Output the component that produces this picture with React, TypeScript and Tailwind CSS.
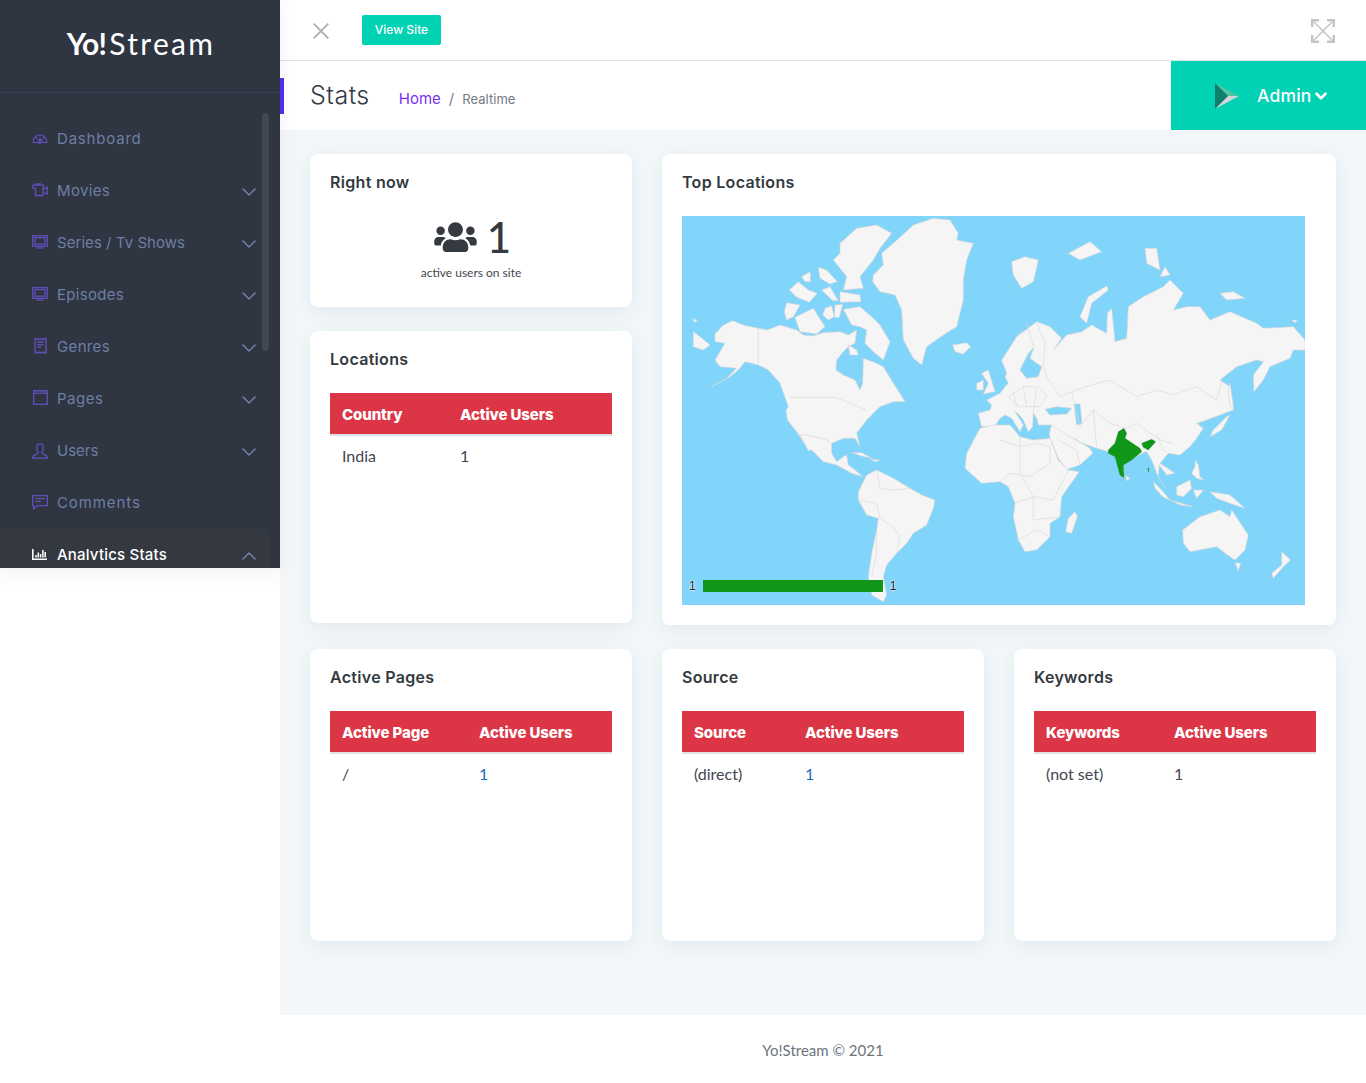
import React from 'react';
import { ChevronDown, ChevronUp } from 'lucide-react';
import { FaUsers } from 'react-icons/fa';

const iconStroke = '#6150bd';

const DashboardIcon = () => (
  <svg viewBox="0 0 16 10" className="w-4 h-[10px]" fill="none" stroke={iconStroke} strokeWidth="1.2">
    <path d="M1 8.5C1 4 4 1 8 1s7 3 7 7.5H10.5L8 4.5 6.8 8.5z" />
    <circle cx="7.6" cy="8" r="1.4" />
    <path d="M3.6 3.4 5.6 5.4M12.4 3.4 10.6 5.4" />
  </svg>
);

const MovieIcon = () => (
  <svg viewBox="0 0 16 14" className="w-4 h-[14px] -mt-[2px]" fill="none" stroke={iconStroke} strokeWidth="1.3">
    <path d="M1 2.2h10.5V5H11V12.5H3.5V5.6L1 5.2z" />
    <path d="M3 1h6.5" />
    <path d="M11 6.5 15.3 4.2V11L11 9.5" />
  </svg>
);

const TvIcon = () => (
  <svg viewBox="0 0 16 14" className="w-4 h-[14px] -mt-[2px]" fill="none" stroke={iconStroke} strokeWidth="1.3">
    <rect x="0.7" y="0.7" width="14.6" height="10.6" />
    <rect x="3" y="2.6" width="10" height="6.6" />
    <path d="M4.5 13h7" />
  </svg>
);

const ReceiptIcon = () => (
  <svg viewBox="0 0 13 16" className="w-[13px] h-4 ml-[2px] -mt-[3px]" fill="none" stroke={iconStroke} strokeWidth="1.3">
    <path d="M1 15V1h11v14l-1.4-1-1.4 1-1.4-1-1.3 1-1.4-1-1.4 1-1.2-1z" />
    <path d="M3.2 4h6.6M3.2 6.6h6.6M3.2 9.2h4" />
  </svg>
);

const PageIcon = () => (
  <svg viewBox="0 0 15 15" className="w-[15px] h-[15px] ml-[1px] -mt-[3px]" fill="none" stroke={iconStroke} strokeWidth="1.3">
    <rect x="0.7" y="0.7" width="13.6" height="13.6" />
    <path d="M0.7 3.4h13.6M3 0.7v2.7M5.5 0.7v2.7M8 0.7v2.7M10.5 0.7v2.7M12.6 0.7v2.7" strokeWidth="0.9" />
  </svg>
);

const UserIcon = () => (
  <svg viewBox="0 0 16 16" className="w-4 h-4 -mt-[1px]" fill="none" stroke={iconStroke} strokeWidth="1.3">
    <path d="M8 0.8c2.2 0 3.4 1.5 3.4 3.5S10.6 8 10 8.8c-.5 1.2.5 2 2 2.6 1.8.7 3.2 1.3 3.2 3.8H.8c0-2.5 1.4-3.1 3.2-3.8 1.5-.6 2.5-1.4 2-2.6C5.4 8 4.6 6.3 4.6 4.3S5.8.8 8 .8z" />
  </svg>
);

const CommentIcon = () => (
  <svg viewBox="0 0 16 15" className="w-4 h-[15px] -mt-[2px]" fill="none" stroke={iconStroke} strokeWidth="1.3">
    <path d="M.7.7h14.6v10H5L1.6 13.8V10.7H.7z" />
    <path d="M3.2 3.7h9.6M3.2 6.4h5.6" />
  </svg>
);

const BarsIcon = () => (
  <svg viewBox="0 0 15 11" className="w-[15px] h-[11px] -mt-[2px]" fill="none" stroke="#ffffff">
    <path d="M.8 0v10.2H15" strokeWidth="1.6" />
    <path d="M4 8.6V6M6.3 8.6V3.5M8.6 8.6V5M10.9 8.6V1M13.2 8.6V3" strokeWidth="1.5" />
  </svg>
);

const navItems = [
  { label: 'Dashboard', icon: <DashboardIcon />, chevron: false, spacing: 'tracking-[0.8px]' },
  { label: 'Movies', icon: <MovieIcon />, chevron: true, spacing: 'tracking-[0.35px]' },
  { label: 'Series / Tv Shows', icon: <TvIcon />, chevron: true, spacing: 'tracking-[0.05px]' },
  { label: 'Episodes', icon: <TvIcon />, chevron: true, spacing: 'tracking-[0.3px]' },
  { label: 'Genres', icon: <ReceiptIcon />, chevron: true, spacing: 'tracking-[0.35px]' },
  { label: 'Pages', icon: <PageIcon />, chevron: true, spacing: 'tracking-[0.5px]' },
  { label: 'Users', icon: <UserIcon />, chevron: true, spacing: 'tracking-[0px]' },
  { label: 'Comments', icon: <CommentIcon />, chevron: false, spacing: 'tracking-[0.9px]' },
];

const Sidebar = () => (
  <aside className="relative z-10 w-[280px] h-[568px] shrink-0 overflow-hidden bg-[#2f3541] shadow-[0_5px_20px_rgba(0,0,0,0.06)]">
    <div className="h-[93px] flex items-center justify-center border-b border-[#393f52] text-white font-['Lato',sans-serif] text-[30px] leading-none pb-[7px] pl-[2px]">
      <span className="font-bold tracking-[-0.7px]">Yo!</span>
      <span className="ml-[3px] tracking-[2.3px]">Stream</span>
    </div>
    <nav className="pt-5">
      {navItems.map((item) => (
        <a key={item.label} className="h-[52px] flex items-center pl-8 pr-[25px] text-[15px] text-[#6d7fa5]">
          <span className="w-[25px] flex items-center">{item.icon}</span>
          <span className={`flex-1 ${item.spacing}`}>{item.label}</span>
          {item.chevron && <ChevronDown className="w-6 h-6 -mr-[6px] mt-[2px] text-[#7689ab]" strokeWidth={1.4} />}
        </a>
      ))}
      <div className="w-[270px] h-[39px] bg-[#343841]">
        <div className="h-[31px] overflow-hidden">
          <a className="h-[52px] flex items-center pl-8 pr-[15px] text-[15px] text-white font-medium">
            <span className="w-[25px] flex items-center"><BarsIcon /></span>
            <span className="flex-1 tracking-[0.2px]">Analytics Stats</span>
            <ChevronUp className="w-6 h-6 -mr-[6px] mt-[2px] text-[#7689ab]" strokeWidth={1.4} />
          </a>
        </div>
      </div>
    </nav>
    <div className="absolute left-[262px] top-[113px] w-[7px] h-[238px] rounded bg-[#414854]" />
  </aside>
);

const ExpandIcon = () => (
  <svg viewBox="0 0 24 24" className="w-6 h-6" fill="none" stroke="#c5c5c5" strokeWidth="2.4">
    <path d="M1.2 8V1.2H8M16 1.2h6.8V8M22.8 16v6.8H16M8 22.8H1.2V16" />
    <path d="M2 2l20 20M22 2 2 22" strokeWidth="1.6" />
  </svg>
);

const TopBar = () => (
  <div className="h-[61px] flex items-center border-b border-[#dce5ea] bg-white">
    <svg viewBox="0 0 16 16" className="w-4 h-4 ml-[33px] mt-[1px]" fill="none" stroke="#b3adad" strokeWidth="1.8">
      <path d="M.7.7l14.6 14.6M15.3.7.7 15.3" />
    </svg>
    <button className="ml-[33px] w-[79px] h-[30px] -mt-[1px] rounded-[2px] bg-[#00d2b3] text-white text-[12px] font-medium">
      View Site
    </button>
    <div className="ml-auto mr-[31px] mt-[2px]">
      <ExpandIcon />
    </div>
  </div>
);

const SubHeader = () => (
  <div className="relative h-[69px] flex items-center bg-white">
    <span className="absolute left-0 top-[17px] w-1 h-9 bg-[#4a32f5]" />
    <h1 className="ml-[30px] text-[25px] font-light text-[#333b45] tracking-[0.5px]">Stats</h1>
    <div className="ml-[29px] mt-[8px] flex items-center">
      <span className="text-[#7b2ff2] text-[15px]">Home</span>
      <span className="mx-2 text-[#7a8590] text-[15px]">/</span>
      <span className="text-[#737b84] text-[13px] tracking-[0.05px]">Realtime</span>
    </div>
    <div className="ml-auto w-[195px] h-full flex items-center bg-[#00d2b3] pl-11">
      <svg viewBox="0 0 24 26" className="w-6 h-[26px]">
        <path d="M0 0 24 13 12 13z" fill="#4fc4a2" />
        <path d="M0 26 24 13 12 13z" fill="#d3d4da" />
        <path d="M0 0V26L13 13z" fill="#0d7f6a" />
      </svg>
      <span className="ml-[18px] mt-[1px] text-white text-[17.5px] font-medium tracking-[0.2px]">Admin</span>
      <ChevronDown className="ml-0 mt-[1px] w-[18px] h-[18px] text-white" strokeWidth={3.6} />
    </div>
  </div>
);

const Card = ({ title, className, children }: { title: string; className: string; children: React.ReactNode }) => (
  <section className={`bg-white rounded-lg px-5 pt-[18px] shadow-[0_5px_20px_rgba(20,60,90,0.08)] ${className}`}>
    <h2 className="h-5 mb-6 text-[16px] leading-5 font-semibold text-[#333a40] tracking-[0.3px]">{title}</h2>
    {children}
  </section>
);

const StatTable = ({ head, row, firstCol, link }: { head: [string, string]; row: [string, string]; firstCol: string; link?: boolean }) => (
  <table className="w-full border-collapse table-fixed">
    <thead>
      <tr className="bg-[#dc3545] border-b-2 border-[#dee2e6]">
        <th className={`h-[42px] pl-3 pt-1 text-left text-white text-[15px] font-extrabold tracking-[-0.1px] ${firstCol}`}>{head[0]}</th>
        <th className="h-[42px] pl-3 pt-1 text-left text-white text-[15px] font-extrabold tracking-[-0.1px]">{head[1]}</th>
      </tr>
    </thead>
    <tbody>
      <tr className="font-['Lato',sans-serif] text-[16px] text-[#3f4650]">
        <td className="h-[41px] pl-3">{row[0]}</td>
        <td className={`h-[41px] pl-3 ${link ? 'text-[#1e6bb8]' : ''}`}>{row[1]}</td>
      </tr>
    </tbody>
  </table>
);

const land = [
  // north america
  '105,372 130,345 158,332 190,345 235,355 262,360 300,345 350,360 370,375 400,378 430,368 480,365 505,375 530,360 525,400 505,410 490,425 470,450 468,480 490,495 525,510 540,540 548,520 550,445 590,460 610,470 640,520 660,550 675,575 640,575 600,590 590,600 560,630 530,670 540,710 525,685 490,685 455,700 455,730 470,755 490,740 500,735 505,765 525,780 548,800 515,790 470,765 430,755 395,720 385,722 360,675 372,700 355,672 322,630 318,600 325,590 300,520 265,480 235,465 195,455 175,480 150,500 95,530 140,505 170,475 120,470 105,450 135,400 105,395',
  '40,365 60,380 90,405 70,420 40,410',
  '40,325 52,332 42,337',
  // canadian arctic
  '480,100 530,55 590,45 635,70 600,115 580,150 540,200 550,235 490,240 500,200 460,150 480,130',
  '490,298 540,290 580,325 600,345 630,395 610,450 580,425 555,400 560,360 540,350 515,345',
  '320,278 360,285 340,320 320,330 313,305',
  '345,322 400,295 435,350 410,372 360,365',
  '328,240 355,215 385,240 412,250 388,277 350,262',
  '415,172 440,180 472,215 450,222 420,205',
  '365,200 390,185 392,215 375,215',
  '425,240 450,230 475,272 458,272',
  '480,245 540,255 542,275 480,277',
  '435,295 455,287 462,320 445,330 428,315',
  '465,285 488,283 478,322 463,322',
  '505,405 530,420 535,435 510,435',
  // greenland, iceland, britain
  '580,195 610,165 605,130 640,100 700,45 760,25 810,30 835,70 830,90 880,100 860,150 850,210 850,270 830,350 790,375 740,410 725,465 700,445 670,390 665,300 645,255 600,245 578,215',
  '818,405 860,398 872,410 850,432 825,425',
  '905,490 925,480 945,545 910,552 925,520',
  '890,520 910,510 910,540 890,540',
  // south america
  '535,845 560,795 590,780 640,805 690,835 725,855 765,870 760,895 740,945 700,970 680,1000 650,1030 620,1065 610,1100 620,1155 610,1175 575,1155 565,1100 575,1030 590,960 595,925 560,915 535,870',
  // caribbean
  '515,728 545,728 575,745 545,738',
  '570,748 600,750 585,755',
  // eurasia
  '965,450 1010,380 1070,335 1110,350 1145,385 1120,420 1160,375 1205,365 1235,345 1280,370 1282,310 1295,295 1305,395 1340,385 1345,290 1390,260 1450,230 1470,210 1510,250 1480,300 1520,290 1560,290 1590,330 1650,305 1730,340 1750,355 1840,350 1875,390 1875,420 1840,420 1830,445 1770,470 1750,510 1722,545 1720,495 1750,455 1730,450 1670,470 1620,510 1650,530 1660,590 1660,600 1580,630 1550,640 1570,655 1550,685 1530,710 1500,735 1465,730 1440,760 1485,790 1460,795 1438,765 1435,800 1455,835 1430,790 1415,750 1400,725 1390,728 1330,760 1332,803 1305,740 1285,725 1250,715 1195,695 1182,685 1230,715 1238,730 1200,765 1160,778 1135,745 1110,685 1108,668 1115,645 1075,645 1070,625 1060,610 1058,650 1045,665 1030,630 1015,612 1005,605 1030,645 1020,665 995,625 975,615 960,625 945,648 905,650 895,610 930,600 935,585 920,570 960,550 975,530 985,520 975,500 980,490',
  // africa
  '900,655 940,645 990,645 1020,680 1060,690 1110,685 1135,750 1165,780 1198,785 1145,860 1140,920 1110,940 1110,980 1070,1020 1035,1025 1015,990 1000,920 1005,880 985,830 960,815 905,820 855,775 860,730',
  '1185,905 1192,920 1175,970 1157,965 1165,925',
  // oceania
  '1508,960 1560,920 1620,900 1650,920 1655,900 1705,975 1695,1020 1665,1050 1635,1030 1610,1010 1530,1025 1510,1000',
  '1665,1058 1682,1060 1675,1082',
  '1805,1025 1832,1050 1810,1070 1780,1105 1775,1090 1805,1065',
  // south east asia and japan
  '1420,815 1445,840 1470,870 1450,862 1425,835',
  '1470,870 1540,890 1500,885',
  '1490,830 1530,810 1535,835 1510,860 1490,855',
  '1540,840 1570,840 1550,865',
  '1545,750 1555,765 1560,800 1572,810 1550,805 1535,790 1545,770',
  '1590,845 1650,855 1695,895 1650,880 1610,865',
  '1650,615 1625,660 1590,680 1600,660 1640,620',
  '1337,797 1350,805 1340,812',
  // arctic russia
  '995,155 1035,140 1075,150 1060,215 1025,235 1000,195',
  '1165,130 1230,95 1265,125 1200,150',
  '1200,320 1225,260 1280,228 1285,240 1235,280 1220,340',
  '1395,115 1430,115 1440,180 1400,160',
  '1440,200 1455,170 1470,195',
  '1620,250 1660,245 1695,265 1640,270',
  '1835,330 1852,330 1845,338',
  '1650,520 1660,590 1650,585 1645,540',
];

const water = [
  '1020,480 1045,430 1062,412 1050,445 1085,470 1075,500 1040,505',
  '1095,598 1130,590 1175,595 1160,612 1110,615',
  '1182,582 1200,582 1206,640 1190,645',
];

const borders = [
  '235,355 235,465',
  '330,562 465,562 500,575 560,600',
  '355,672 400,680 440,690 455,700',
  '590,780 600,835 640,840 690,835',
  '535,870 590,880 600,925 640,950 660,980 650,1030',
  '590,960 590,1030 575,1100',
  '1175,545 1250,520 1290,510 1370,560 1430,540 1480,555 1550,530 1610,570 1625,515',
  '1070,335 1095,400 1090,465 1100,500 1140,560 1175,545',
  '1010,380 1040,340 1060,410',
  '985,560 1030,530 1075,530 1100,560 1080,590 1020,590 985,560',
  '1030,530 1040,590',
  '1000,545 1010,590',
  '1070,530 1060,610',
  '1175,545 1200,650 1240,600 1290,640 1340,655 1370,640 1440,690 1480,700',
  '1240,600 1250,715',
  '1115,645 1170,680 1195,695',
  '1135,690 1190,720 1200,765',
  '960,690 1020,710 1070,700 1110,710 1110,760 1050,800 990,790 960,815',
  '1020,680 1020,790 1060,860 1120,870 1165,780',
  '1005,880 1060,860 1060,930 1140,920',
  '1015,990 1070,960 1110,980',
  '1430,670 1450,720 1465,730',
];

const india = [
  '1332,655 1340,670 1335,685 1380,715 1385,725 1355,750 1330,765 1332,803 1320,795 1305,740 1285,730 1285,720 1305,700 1315,665',
  '1385,700 1415,688 1427,695 1405,720 1390,712',
  '1403,775 1407,775 1405,786',
];

// hand traced world map, coordinates are 3x page pixels
const WorldMap = () => (
  <div className="relative w-[623px] h-[389px] bg-[#81d4fa]">
    <svg viewBox="6 18 1869 1167" className="w-full h-full">
      <g fill="#f5f5f5" stroke="#d6d6d6" strokeWidth="2" strokeLinejoin="round">
        {land.map((p, i) => <polygon key={i} points={p} />)}
      </g>
      <g fill="#81d4fa" stroke="#d6d6d6" strokeWidth="2">
        {water.map((p, i) => <polygon key={i} points={p} />)}
      </g>
      <g fill="none" stroke="#d9d9d9" strokeWidth="2">
        {borders.map((p, i) => <polyline key={i} points={p} />)}
      </g>
      <g fill="#109618" stroke="#109618" strokeWidth="1">
        {india.map((p, i) => <polygon key={i} points={p} />)}
      </g>
    </svg>
    <div className="absolute left-[7px] top-[363px] flex items-center gap-[7px] font-['Liberation_Sans',sans-serif] text-[12px] leading-[14px] text-[#222] [text-shadow:0_0_2px_#fff,0_0_2px_#fff]">
      <span>1</span>
      <span className="w-[180px] h-3 bg-[#109618]" />
      <span>1</span>
    </div>
  </div>
);

export default function App() {
  return (
    <div className="flex min-h-[1083px] bg-white font-['Inter',sans-serif]">
      <Sidebar />
      <main className="flex-1 flex flex-col min-w-0">
        <TopBar />
        <SubHeader />
        <div className="h-[885px] bg-[#f3f7fa] px-[30px] pt-6">
          <div className="grid grid-cols-3 gap-x-[30px]">
            <div className="flex flex-col gap-6">
              <Card title="Right now" className="h-[153px]">
                <div className="mt-[2px] pl-[3px] flex items-center justify-center gap-[10px] h-[42px]">
                  <FaUsers className="w-[43px] h-[34px] text-[#343a40]" />
                  <span className="font-['Lato',sans-serif] font-medium text-[42px] leading-none text-[#343a40]">1</span>
                </div>
                <p className="mt-[7px] text-center font-['Lato',sans-serif] text-[12px] leading-4 text-[#3f4650]">active users on site</p>
              </Card>
              <Card title="Locations" className="h-[292px]">
                <StatTable head={['Country', 'Active Users']} row={['India', '1']} firstCol="w-[118px]" />
              </Card>
            </div>
            <Card title="Top Locations" className="col-span-2 h-[471px]">
              <WorldMap />
            </Card>
          </div>
          <div className="grid grid-cols-3 gap-x-[30px] mt-6">
            <Card title="Active Pages" className="h-[292px]">
              <StatTable head={['Active Page', 'Active Users']} row={['/', '1']} firstCol="w-[137px]" link />
            </Card>
            <Card title="Source" className="h-[292px]">
              <StatTable head={['Source', 'Active Users']} row={['(direct)', '1']} firstCol="w-[111px]" link />
            </Card>
            <Card title="Keywords" className="h-[292px]">
              <StatTable head={['Keywords', 'Active Users']} row={['(not set)', '1']} firstCol="w-[128px]" />
            </Card>
          </div>
        </div>
        <footer className="h-[68px] pt-[2px] flex items-center justify-center font-['Lato',sans-serif] text-[15px] text-[#6c757d]">
          Yo!Stream © 2021
        </footer>
      </main>
    </div>
  );
}
